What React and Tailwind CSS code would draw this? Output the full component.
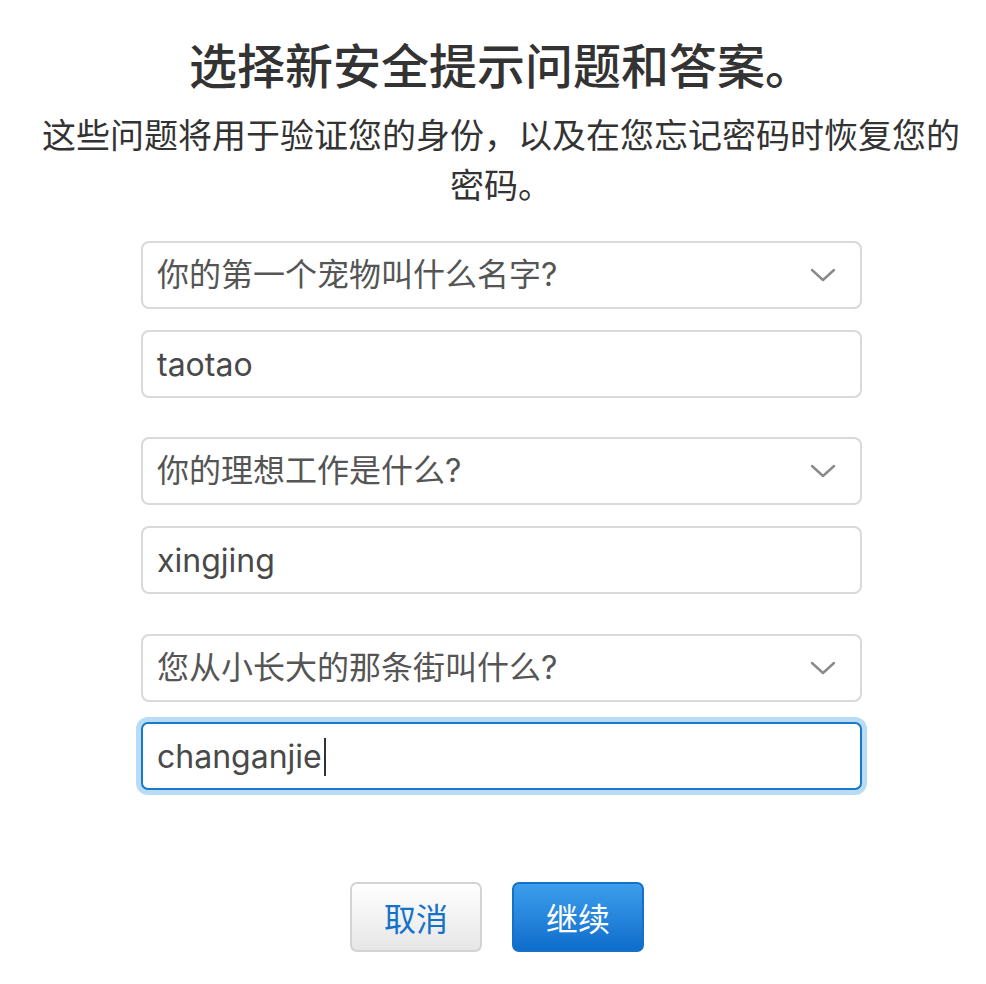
import React from "react";

const font = { fontFamily: '"Noto Sans CJK SC", sans-serif' };

function Chevron() {
  return (
    <svg width="26" height="16" viewBox="0 0 26 16" className="shrink-0">
      <path d="M2 3 L13 13 L24 3" fill="none" stroke="#8a8a8a" strokeWidth="2.4" strokeLinecap="round" strokeLinejoin="round" />
    </svg>
  );
}

function Select({ text }) {
  return (
    <div className="h-[68px] w-full rounded-[8px] border-2 border-[#d9d9d9] bg-white flex items-center justify-between pl-[14px] pr-[24px]">
      <span className="text-[32px] text-[#555] leading-none font-['Inter','Noto_Sans_CJK_SC',sans-serif]">{text}</span>
      <Chevron />
    </div>
  );
}

function Field({ text, focused }) {
  if (focused) {
    return (
      <div className="rounded-[12px] p-[5px] bg-[#b9dcf5] -m-[5px]">
        <div className="h-[68px] w-full rounded-[7px] border-2 border-[#1679cf] bg-white flex items-center pl-[14px] pt-[2px]">
          <span className="text-[32px] text-[#494949] leading-none font-['Inter','Noto_Sans_CJK_SC',sans-serif]">{text}</span>
          <span className="ml-[2px] w-[2px] h-[38px] bg-[#333]" />
        </div>
      </div>
    );
  }
  return (
    <div className="h-[68px] w-full rounded-[8px] border-2 border-[#d9d9d9] bg-white flex items-center pl-[14px] pt-[2px]">
      <span className="text-[32px] text-[#494949] leading-none font-['Inter','Noto_Sans_CJK_SC',sans-serif]">{text}</span>
    </div>
  );
}

export default function App() {
  return (
    <div className="w-[986px] h-[984px] bg-white text-[#333]" style={font}>
      <div className="pt-[32px] pl-[16px] text-center">
        <h1 className="text-[48px] leading-[62px] font-medium text-[#333]">选择新安全提示问题和答案。</h1>
        <p className="mt-[15px] mx-auto w-[930px] text-[34px] leading-[50px] text-[#333]">
          这些问题将用于验证您的身份，以及在您忘记密码时恢复您的密码。
        </p>
      </div>
      <div className="ml-[141px] w-[721px] mt-[32px] flex flex-col">
        <Select text="你的第一个宠物叫什么名字?" />
        <div className="mt-[21px]"><Field text="taotao" /></div>
        <div className="mt-[39px]"><Select text="你的理想工作是什么?" /></div>
        <div className="mt-[21px]"><Field text="xingjing" /></div>
        <div className="mt-[40px]"><Select text="您从小长大的那条街叫什么?" /></div>
        <div className="mt-[20px]"><Field text="changanjie" focused /></div>
      </div>
      <div className="mt-[92px] flex justify-center gap-[30px] pl-[8px]">
        <button className="w-[132px] h-[70px] rounded-[7px] border-2 border-[#d3d3d3] bg-gradient-to-b from-[#ffffff] to-[#e6e6e6] text-[32px] text-[#1473c9] leading-none">取消</button>
        <button className="w-[132px] h-[70px] rounded-[7px] border-2 border-[#1570c8] bg-gradient-to-b from-[#3c9eec] to-[#0e6dcc] text-[32px] text-white leading-none">继续</button>
      </div>
    </div>
  );
}
